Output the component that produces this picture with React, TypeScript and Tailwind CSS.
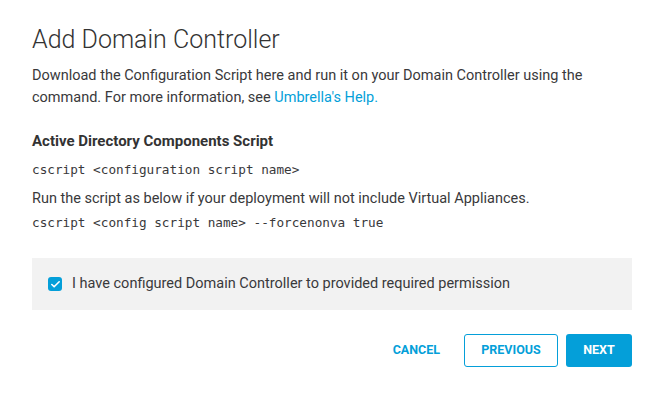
import { Check } from 'lucide-react';

export default function App() {
  return (
    <div className="w-[664px] h-[400px] bg-white text-[#39393b] font-['Roboto',sans-serif]">
      <div className="px-8 pt-[24px]">
        <h1 className="text-[25px] leading-[32px] font-light text-[#333]">Add Domain Controller</h1>
        <p className="mt-[9px] text-[14.5px] leading-[22px]">
          Download the Configuration Script here and run it on your Domain Controller using the command. For more
          information, see <a className="text-[#049fd9]">Umbrella's Help.</a>
        </p>

        <h2 className="mt-[22px] text-[15px] leading-[20px] font-bold text-[#333]">Active Directory Components Script</h2>
        <div className="mt-[9px] font-['DejaVu_Sans_Mono',monospace] text-[12.7px] leading-[20px]">
          cscript &lt;configuration script name&gt;
        </div>
        <p className="mt-[9px] text-[14.5px] leading-[20px]">
          Run the script as below if your deployment will not include Virtual Appliances.
        </p>
        <div className="mt-[4px] font-['DejaVu_Sans_Mono',monospace] text-[12.7px] leading-[20px]">
          cscript &lt;config script name&gt; --forcenonva true
        </div>

        <label className="mt-[25px] h-[52px] bg-[#f2f2f2] flex items-center gap-[10px] pl-4 text-[14.5px]">
          <span className="w-[14px] h-[14px] rounded-[3px] bg-[#049fd9] flex items-center justify-center">
            <Check className="w-[11px] h-[11px] text-white" strokeWidth={3.5} />
          </span>
          I have configured Domain Controller to provided required permission
        </label>

        <div className="mt-6 flex justify-end items-center text-[12.5px] font-bold">
          <button className="uppercase text-[#049fd9] pr-6 h-[33px]">Cancel</button>
          <button className="uppercase w-[94px] h-[33px] border border-[#049fd9] rounded-[3px] text-[#049fd9]">Previous</button>
          <button className="uppercase ml-2 w-[66px] h-[33px] rounded-[3px] bg-[#049fd9] text-white">Next</button>
        </div>
      </div>
    </div>
  );
}
